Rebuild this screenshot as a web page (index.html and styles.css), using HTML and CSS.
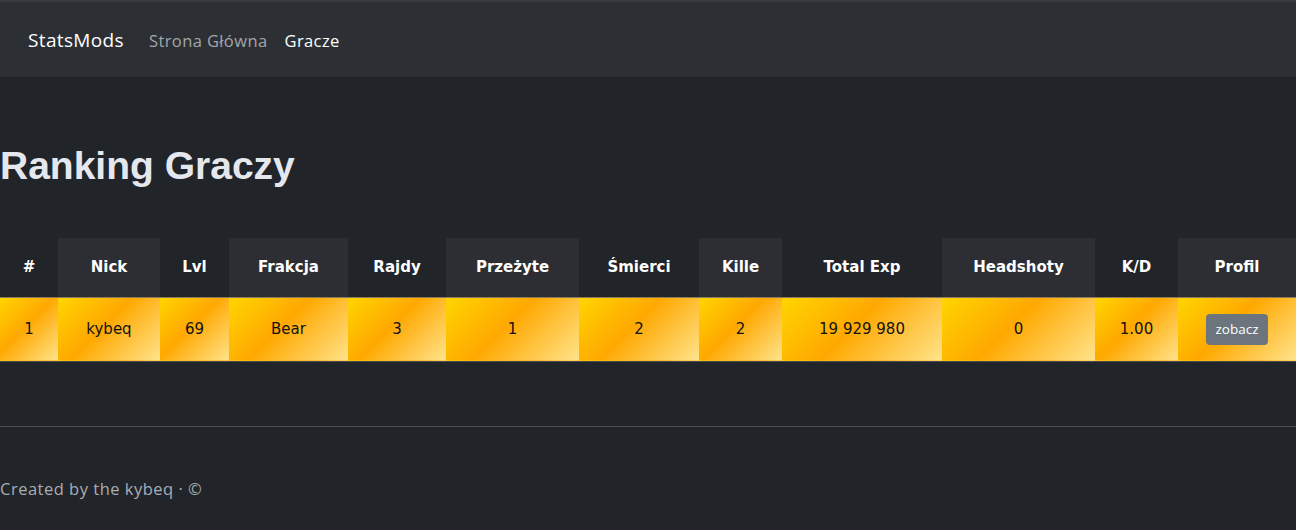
FILE: index.html
```html
<!DOCTYPE html>
<html lang="pl">
<head>
<meta charset="utf-8">
<title>Ranking Graczy</title>
<link rel="stylesheet" href="styles.css">
</head>
<body>
<div class="topline"></div>
<nav class="navbar">
  <a class="brand" href="#">StatsMods</a>
  <a class="nav-link" href="#">Strona Główna</a>
  <a class="nav-link active" href="#">Gracze</a>
</nav>
<main class="content">
  <h1 class="title">Ranking Graczy</h1>
  <table class="ranking">
    <thead>
      <tr>
        <th>#</th><th>Nick</th><th>Lvl</th><th>Frakcja</th><th>Rajdy</th><th>Przeżyte</th><th>Śmierci</th><th>Kille</th><th>Total Exp</th><th>Headshoty</th><th>K/D</th><th>Profil</th>
      </tr>
    </thead>
    <tbody>
      <tr>
        <td>1</td><td>kybeq</td><td>69</td><td>Bear</td><td>3</td><td>1</td><td>2</td><td>2</td><td>19 929 980</td><td>0</td><td>1.00</td><td><a class="btn" href="#">zobacz</a></td>
      </tr>
    </tbody>
  </table>
</main>
<footer class="footer">
  <hr class="divider">
  <p class="credits">Created by the kybeq · ©</p>
</footer>
</body>
</html>
```

FILE: styles.css
```css
* { box-sizing: border-box; }
html, body { margin: 0; padding: 0; }
body {
  background: #212429;
  color: #dee2e6;
  font-family: "Open Sans", "Noto Sans", sans-serif;
  height: 530px;
  overflow: hidden;
}
.topline { height: 2px; background: #3b3c41; }
.navbar {
  height: 75px;
  background: #2c3035;
  display: flex;
  align-items: center;
  padding: 1px 28px 0 28px;
}
.brand {
  color: #ffffff;
  text-decoration: none;
  font-size: 19px;
  letter-spacing: 0.35px;
  margin-right: 25px;
}
.nav-link {
  color: #a3a6aa;
  text-decoration: none;
  font-size: 16.5px;
  letter-spacing: 0.4px;
  margin-right: 17px;
}
.nav-link.active { color: #ffffff; }
.content { padding-top: 65px; }
.title {
  margin: 0 0 48px 0;
  font-family: "Liberation Sans", Arial, sans-serif;
  font-weight: bold;
  font-size: 39px;
  line-height: 48px;
  color: #e4e8ee;
}
.ranking {
  width: 100%;
  border-collapse: collapse;
  table-layout: fixed;
  font-family: "DejaVu Sans", sans-serif;
}
.ranking th {
  height: 59px;
  font-size: 15px;
  font-weight: bold;
  color: #ffffff;
  text-align: center;
  background: #212429;
}
.ranking th:nth-child(even) { background: #2c2e33; }
.ranking th:nth-child(1) { width: 58px; }
.ranking th:nth-child(2) { width: 102px; }
.ranking th:nth-child(3) { width: 69px; }
.ranking th:nth-child(4) { width: 119px; }
.ranking th:nth-child(5) { width: 98px; }
.ranking th:nth-child(6) { width: 133px; }
.ranking th:nth-child(7) { width: 120px; }
.ranking th:nth-child(8) { width: 83px; }
.ranking th:nth-child(9) { width: 160px; }
.ranking th:nth-child(10) { width: 153px; }
.ranking th:nth-child(11) { width: 83px; }
.ranking th:nth-child(12) { width: 118px; }
.ranking tbody tr {
  border-top: 1px solid #8a7a5a;
  border-bottom: 1px solid #4a4c50;
}
.ranking td {
  height: 64px;
  text-align: center;
  font-size: 15px;
  color: #111111;
  background: linear-gradient(135deg, #ffd500 0%, #ffa800 45%, #ffe38c 100%);
}
.btn {
  display: inline-block;
  background: #6c757d;
  color: #ffffff;
  text-decoration: none;
  font-family: "Open Sans", "Noto Sans", sans-serif;
  font-size: 13.5px;
  line-height: 21px;
  padding: 5px 9px;
  border-radius: 4px;
}
.footer { padding-top: 64px; }
.divider {
  margin: 0;
  border: 0;
  border-top: 1px solid #4b4e53;
}
.credits {
  margin: 50px 0 0 0;
  font-size: 16.5px;
  letter-spacing: 0.5px;
  color: #a9aeb4;
}
```
